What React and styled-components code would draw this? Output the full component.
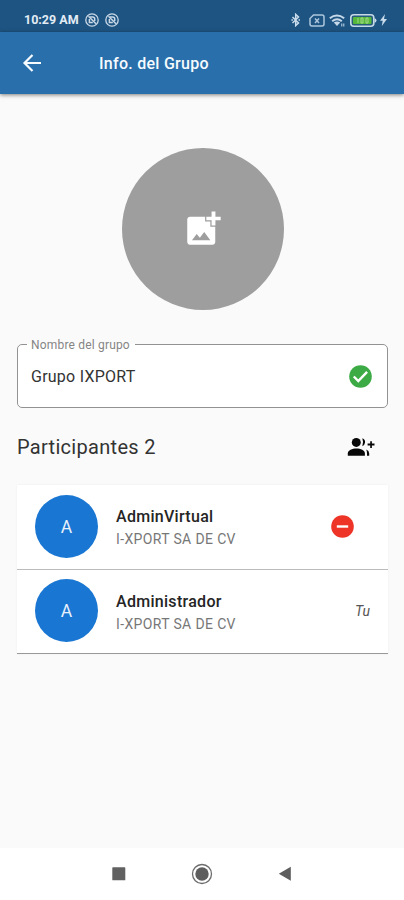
import React from "react";
import styled, { createGlobalStyle } from "styled-components";

const GlobalStyle = createGlobalStyle`
  * { box-sizing: border-box; }
  body { margin: 0; background: #fafafa; font-family: Roboto, "Liberation Sans", sans-serif; }
`;

const Screen = styled.div`
  width: 404px;
  height: 900px;
  display: flex;
  flex-direction: column;
  background: #fafafa;
  overflow: hidden;
`;

const StatusBar = styled.div`
  height: 32px;
  flex: none;
  display: flex;
  align-items: center;
  justify-content: space-between;
  padding: 8px 17px 0 24px;
  background: #1e5482;
  color: #e3ecf4;
`;

const StatusGroup = styled.div`
  display: flex;
  align-items: center;
  gap: ${(p) => p.$gap}px;
`;

const Clock = styled.span`
  width: 55px;
  font-size: 12.5px;
  line-height: 16px;
  font-weight: 700;
  white-space: nowrap;
`;

const AppBar = styled.header`
  height: 62px;
  flex: none;
  display: flex;
  align-items: center;
  padding-left: 20px;
  gap: 55px;
  background: #296fab;
  color: #f6fbff;
  box-shadow: 0 1px 4px rgba(0, 0, 0, 0.5);
`;

const Title = styled.h1`
  margin: 0;
  padding-top: 2px;
  font-size: 16px;
  line-height: 20px;
  font-weight: 500;
  letter-spacing: 0.27px;
`;

const Content = styled.main`
  flex: 1;
  display: flex;
  flex-direction: column;
  padding: 54px 16px 0 17px;
`;

const GroupPhoto = styled.div`
  width: 162px;
  height: 162px;
  margin-left: 105px;
  border-radius: 50%;
  background: #9e9e9e;
  display: flex;
  align-items: center;
  justify-content: center;
  padding-right: 1px;
`;

const Field = styled.fieldset`
  height: 71px;
  min-width: 0;
  margin: 27px 0 0;
  padding: 0 15px 6px 9px;
  border: 1px solid #929292;
  border-radius: 5px;
  background: #fff;
  display: flex;
`;

const FieldLabel = styled.legend`
  padding: 1px 5px 0 4px;
  font-size: 12px;
  line-height: 14px;
  letter-spacing: 0.18px;
  color: #858585;
`;

const FieldRow = styled.div`
  flex: 1;
  height: 49px;
  display: flex;
  align-items: center;
  justify-content: space-between;
  padding-left: 4px;
`;

const FieldValue = styled.span`
  font-size: 16px;
  letter-spacing: 0.24px;
  color: #333;
`;

const SectionHead = styled.div`
  height: 77px;
  display: flex;
  align-items: center;
  justify-content: space-between;
  padding: 0 13px 0 0;
`;

const SectionTitle = styled.h2`
  margin: 0;
  font-size: 20px;
  font-weight: 400;
  letter-spacing: 0.3px;
  color: #333;
`;

const List = styled.div`
  display: flex;
  flex-direction: column;
  background: #fff;
  box-shadow: 0 0 2px rgba(0, 0, 0, 0.06);
`;

const Member = styled.div`
  height: ${(p) => p.$height}px;
  display: flex;
  align-items: center;
  padding: 0 ${(p) => p.$end}px 2px 18px;
  border-bottom: 1px solid ${(p) => p.$line};
`;

const Avatar = styled.div`
  width: 63px;
  height: 63px;
  flex: none;
  border-radius: 50%;
  background: #1976d2;
  color: #e8f1fb;
  display: flex;
  align-items: center;
  justify-content: center;
  padding-top: 1px;
  font-size: 17.5px;
`;

const MemberText = styled.div`
  flex: 1;
  margin-left: 18px;
  padding-top: 4px;
`;

const MemberName = styled.div`
  font-size: 16px;
  line-height: 22px;
  font-weight: 500;
  letter-spacing: 0.29px;
  color: #252525;
`;

const MemberCompany = styled.div`
  font-size: 14px;
  line-height: 22px;
  letter-spacing: 0.36px;
  color: #777;
`;

const You = styled.span`
  font-size: 14px;
  font-style: italic;
  color: #555;
`;

const NavBar = styled.nav`
  height: 52px;
  flex: none;
  display: flex;
  align-items: center;
  justify-content: space-between;
  padding: 0 112px;
  background: #fff;
`;

const Icon = styled.svg`
  display: block;
  flex: none;
`;

const Muted = () => (
  <Icon width="14" height="14" viewBox="0 0 14 14" fill="none" stroke="#c9d9e7">
    <circle cx="7" cy="7" r="6.200" strokeWidth="1.300" />
    <path d="M3.500 3.200l7.500 7.500" strokeWidth="1.500" />
    <path d="M5 4h2.700a2 2 0 0 1 2 2v2M4.400 6v3.600h3.400" strokeWidth="1.500" />
  </Icon>
);

const Bluetooth = () => (
  <Icon width="10" height="14" viewBox="0 0 10 14" fill="none" stroke="#c9dceb" strokeWidth="1.500">
    <path d="M1.500 4l6 6L4.700 12.600V1.400L7.500 4l-6 6" />
    <path d="M.4 7h1.500M7.500 7H9" />
  </Icon>
);

const Sim = () => (
  <Icon width="16" height="13" viewBox="0 0 16 13" fill="none" stroke="#adc6dc" strokeWidth="1.500">
    <path d="M4.500 1H13a2 2 0 0 1 2 2v7a2 2 0 0 1-2 2H3a2 2 0 0 1-2-2V4.500z" />
    <path d="M6 4.500l4 4.500M10 4.500L6 9" />
  </Icon>
);

const Wifi = () => (
  <Icon width="17" height="13" viewBox="0 0 17 13" fill="none" stroke="#c6d9e9" strokeWidth="2">
    <path d="M.8 4.200q7-5.400 14.400 0M3.200 7.200q4.800-3.800 9.600 0" />
    <path d="M4.800 8.500q3.200-2 6.400 0L8 12z" fill="#c6d9e9" stroke="none" />
    <path d="M12.800 9.500v3M14.800 9.500v3" strokeWidth="1" />
  </Icon>
);

const Battery = () => (
  <Icon width="27" height="13" viewBox="0 0 27 13">
    <rect x=".8" y=".8" width="23" height="11.400" rx="3" fill="#265b7c" stroke="#c6d9e7" strokeWidth="1.600" />
    <rect x="3" y="3" width="18.500" height="7" rx="1" fill="#55b83b" />
    <path d="M8 4v5M11 4h2v5h-2zM16 4h2v5h-2z" fill="none" stroke="#a4d98a" strokeWidth="1" />
    <path d="M24.500 4.200q2 .3 2 2.300t-2 2.300z" fill="#c6d9e7" />
  </Icon>
);

const Bolt = () => (
  <Icon width="7" height="12" viewBox="0 0 7 12" fill="#c9dceb">
    <path d="M5 0L0 6.800h2.700L1.800 12 7 5H4z" />
  </Icon>
);

const Back = () => (
  <Icon width="24" height="24" viewBox="0 0 24 24" fill="none" stroke="currentColor" strokeWidth="2.200">
    <path d="M21 12H5M12.500 4L4.500 12l8 8" />
  </Icon>
);

const AddPhoto = () => (
  <Icon width="42" height="42" viewBox="0 0 24 24" fill="#fff">
    <path d="M19.100 7v3h-2.200V7h-3V5h3V2h2.200v3h3v2z" />
    <path
      fillRule="evenodd"
      d="M13.200 5H4.600C3.700 5 3 5.700 3 6.600v12.800c0 .9.700 1.600 1.600 1.600h12.800c.9 0 1.600-.7 1.600-1.600v-8.700h-2.800v-3h-3zM5.700 18.400l2.700-3.500 1.800 2.100 2.500-3.300 3.500 4.700z"
    />
  </Icon>
);

const Check = () => (
  <Icon width="23" height="23" viewBox="0 0 23 23">
    <circle cx="11.500" cy="11.500" r="11.300" fill="#3cab45" />
    <path d="M4.800 11.500l4.500 4.500 8.800-9.200" fill="none" stroke="#fff" strokeWidth="2.400" />
  </Icon>
);

const AddGroup = () => (
  <Icon width="28" height="20" viewBox="0 0 28 20" fill="#080808">
    <circle cx="9.300" cy="5.400" r="4.500" />
    <path d="M.8 18.700v-2.400C.8 13 5.300 11.400 9.400 11.400s8.500 1.600 8.500 4.900v2.400z" />
    <path d="M15.300 1.200q3.300 1.100 2.700 4.500-.4 2.600-2.700 3.500 1.600-4 0-8z" />
    <path d="M19.200 12.600q3 1.300 3 3.800v2.300h-2.200v-2.300q0-2-.8-3.800z" />
    <path d="M23.200 4.200h1.700v2.400h2.600v1.900h-2.600v2.400h-1.700V8.500h-2.600V6.600h2.600z" />
  </Icon>
);

const Remove = () => (
  <Icon width="23" height="23" viewBox="0 0 23 23">
    <circle cx="11.500" cy="11.500" r="11.300" fill="#ee3427" />
    <path d="M5.800 11.500h11.400" stroke="#fff" strokeWidth="2.400" />
  </Icon>
);

const Recents = () => (
  <Icon width="14" height="14" viewBox="0 0 14 14">
    <rect x=".3" y=".3" width="13" height="13" rx=".6" fill="#616161" />
  </Icon>
);

const Home = () => (
  <Icon width="22" height="22" viewBox="0 0 22 22">
    <circle cx="11" cy="11" r="9.500" fill="#fff" stroke="#6c6c6c" strokeWidth="1.300" />
    <circle cx="11" cy="11" r="6.700" fill="#5e5e5e" />
  </Icon>
);

const Previous = () => (
  <Icon width="14" height="16" viewBox="0 0 14 16">
    <path d="M12.800.8v14L.8 7.800z" fill="#5e5e5e" />
  </Icon>
);

const members = [
  { name: "AdminVirtual", company: "I-XPORT SA DE CV", height: 85, line: "#bcbcbc", end: 34 },
  { name: "Administrador", company: "I-XPORT SA DE CV", height: 84, line: "#999", end: 18, self: true },
];

export default function App() {
  return (
    <>
      <GlobalStyle />
      <Screen>
        <StatusBar>
          <StatusGroup $gap={6}>
            <Clock>10:29 AM</Clock>
            <Muted />
            <Muted />
          </StatusGroup>
          <StatusGroup $gap={3}>
            <StatusGroup $gap={8}>
              <Bluetooth />
              <StatusGroup $gap={4}>
                <Sim />
                <Wifi />
                <Battery />
              </StatusGroup>
            </StatusGroup>
            <Bolt />
          </StatusGroup>
        </StatusBar>
        <AppBar>
          <Back />
          <Title>Info. del Grupo</Title>
        </AppBar>
        <Content>
          <GroupPhoto>
            <AddPhoto />
          </GroupPhoto>
          <Field>
            <FieldLabel>Nombre del grupo</FieldLabel>
            <FieldRow>
              <FieldValue>Grupo IXPORT</FieldValue>
              <Check />
            </FieldRow>
          </Field>
          <SectionHead>
            <SectionTitle>Participantes 2</SectionTitle>
            <AddGroup />
          </SectionHead>
          <List>
            {members.map((m) => (
              <Member key={m.name} $height={m.height} $line={m.line} $end={m.end}>
                <Avatar>A</Avatar>
                <MemberText>
                  <MemberName>{m.name}</MemberName>
                  <MemberCompany>{m.company}</MemberCompany>
                </MemberText>
                {m.self ? <You>Tu</You> : <Remove />}
              </Member>
            ))}
          </List>
        </Content>
        <NavBar>
          <Recents />
          <Home />
          <Previous />
        </NavBar>
      </Screen>
    </>
  );
}
